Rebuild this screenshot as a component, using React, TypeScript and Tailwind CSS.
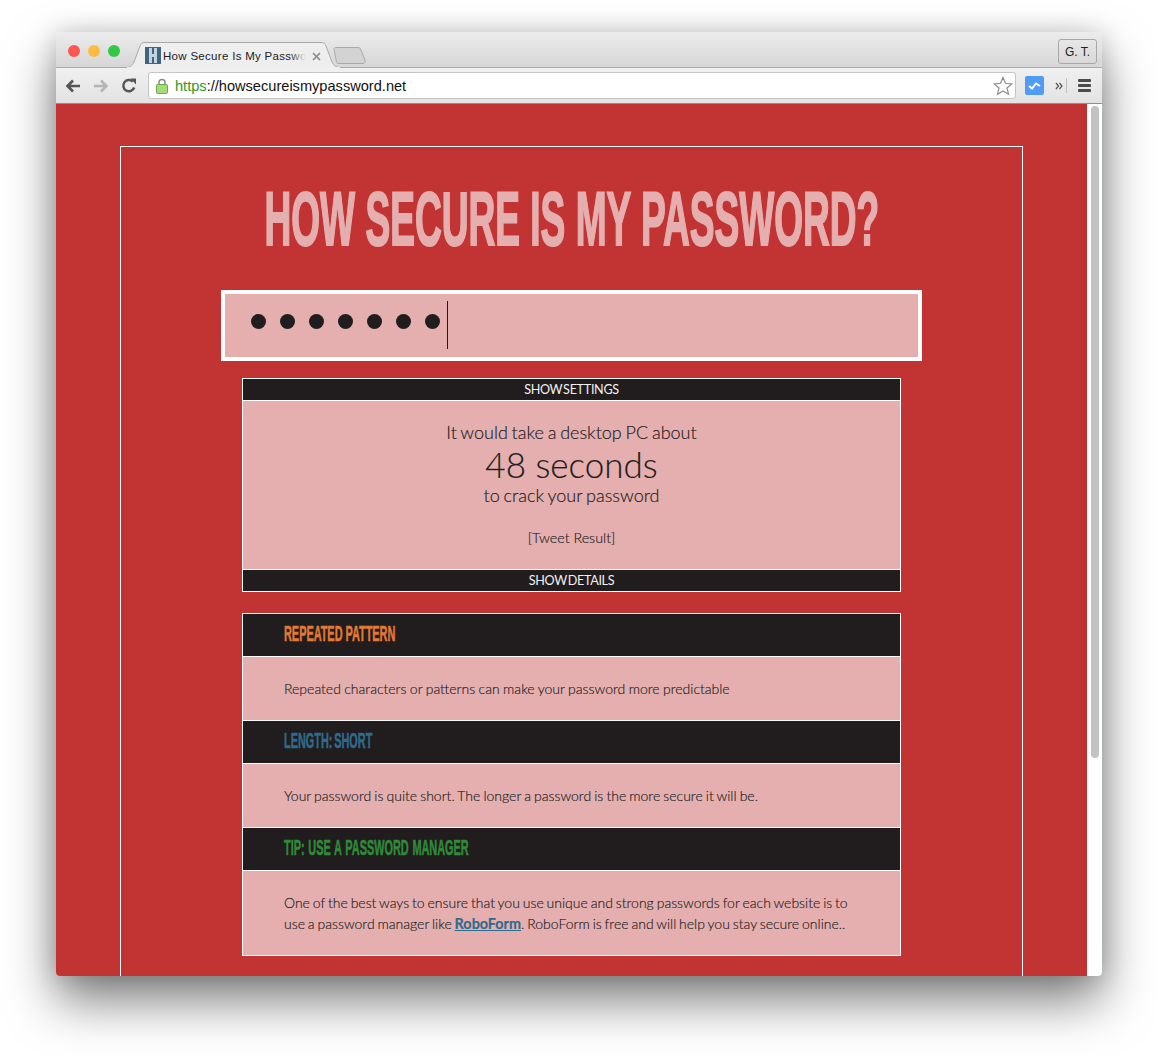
import React from "react";

const narrow = "font-['Liberation_Sans',sans-serif]";

function Section({ title, color, stroke, children }: { title: string; color: string; stroke: string; children: React.ReactNode }) {
  return (
    <>
      <div className="h-[43px] flex items-center pl-[41px] pb-[2px] bg-[#211c1d] border-b border-white">
        <span className={`${narrow} font-bold text-[22px] leading-none whitespace-nowrap inline-block origin-left scale-x-[0.495] ${stroke} ${color}`}>{title}</span>
      </div>
      {children}
    </>
  );
}

export default function App() {
  return (
    <div className="w-[1158px] h-[1056px] bg-white pl-[56px] pt-[32px] overflow-hidden font-['Lato',sans-serif]">
      <div className="w-[1046px] h-[944px] rounded-[4px] overflow-hidden flex flex-col shadow-[0_25px_50px_rgba(0,0,0,0.5),0_0_24px_rgba(0,0,0,0.16)]">
        {/* tab strip */}
        <div className="h-[36px] shrink-0 flex items-end bg-gradient-to-b from-[#ececec] to-[#d6d6d6] border-b border-[#a9a9a9] relative">
          <div className="flex gap-[8px] pl-[12px] pb-[10px]">
            <div className="w-[12px] h-[12px] rounded-full bg-[#fc5753]" />
            <div className="w-[12px] h-[12px] rounded-full bg-[#fdbc40]" />
            <div className="w-[12px] h-[12px] rounded-full bg-[#33c748]" />
          </div>
          <svg className="absolute left-[70px] bottom-[-1px]" width="216" height="26" viewBox="0 0 216 26">
            <path d="M0 25.5 C4 25.5 6 24 8 20 L14 4 C15 1.5 16 0.5 19 0.5 L195 0.5 C198 0.5 199 1.5 200 4 L206 20 C208 24 210 25.5 215 25.5" fill="#eeeeee" stroke="#a9a9a9" />
            <path d="M1 25.5 H214" stroke="#eeeeee" />
          </svg>
          <svg className="absolute left-[277px] bottom-[3px]" width="33" height="17" viewBox="0 0 33 17">
            <path d="M1 2.5 C1 1 2 0.5 3 0.5 L25 0.5 C26.5 0.5 27 1 27.5 2 L32 13 C32.5 15 31.5 16.5 30 16.5 L6 16.5 C4.5 16.5 4 16 3.5 15 Z" fill="#d3d3d3" stroke="#a9a9a9" />
          </svg>
          <div className="absolute left-[89px] top-[15px] w-[16px] h-[17px] bg-[#3c6682] flex items-center justify-center">
            <div className="w-[3px] h-[15px] bg-[#c6d3dc]" />
            <div className="w-[2px] h-[3px] bg-[#c6d3dc]" />
            <div className="w-[3px] h-[15px] bg-[#c6d3dc]" />
          </div>
          <div className="absolute left-[107px] top-[16px] w-[143px] overflow-hidden whitespace-nowrap text-[11.5px] leading-[16px] text-[#222] font-['Liberation_Sans',sans-serif] tracking-[0.3px]">
            How Secure Is My Passwo
            <div className="absolute right-0 top-0 w-[16px] h-full bg-gradient-to-r from-transparent to-[#eeeeee]" />
          </div>
          <svg className="absolute left-[256px] top-[20px]" width="9" height="9" viewBox="0 0 9 9">
            <path d="M1 1 L8 8 M8 1 L1 8" stroke="#888" strokeWidth="1.6" />
          </svg>
          <div className="absolute right-[5px] top-[7px] w-[39px] h-[25px] rounded-[3px] border border-[#a8a8a8] flex items-center justify-center text-[12px] text-[#222] font-['Liberation_Sans',sans-serif]">
            G. T.
          </div>
        </div>
        {/* toolbar */}
        <div className="h-[36px] shrink-0 flex items-center bg-gradient-to-b from-[#f0f0f0] to-[#e3e3e3] border-b border-[#8f8f8f] pl-[9px]">
          <svg width="16" height="14" viewBox="0 0 16 14" className="mr-[12px]">
            <path d="M15 7 H3 M8 1.5 L2.5 7 L8 12.5" fill="none" stroke="#555" strokeWidth="2.6" />
          </svg>
          <svg width="16" height="14" viewBox="0 0 16 14" className="mr-[12px]">
            <path d="M1 7 H13 M8 1.5 L13.5 7 L8 12.5" fill="none" stroke="#b5b5b5" strokeWidth="2.6" />
          </svg>
          <svg width="16" height="16" viewBox="0 0 16 16" className="mr-[11px]">
            <path d="M13.2 9.5 A5.6 5.6 0 1 1 11.8 3.6" fill="none" stroke="#555" strokeWidth="2.5" />
            <path d="M9.5 0.5 H15 V6.5 Z" fill="#555" />
          </svg>
          <div className="w-[868px] h-[27px] bg-white rounded-[3px] border border-[#c4c4c4] flex items-center pl-[7px] relative">
            <svg width="12" height="16" viewBox="0 0 12 16" className="mr-[7px]">
              <path d="M3 7 V4.5 A3 3 0 0 1 9 4.5 V7" fill="none" stroke="#8a8a8a" strokeWidth="1.5" />
              <rect x="0.5" y="6.5" width="11" height="9" rx="1" fill="#a5dc78" stroke="#6fa84a" />
            </svg>
            <span className="text-[14.6px] pt-[2px] font-['Liberation_Sans',sans-serif] text-[#111] whitespace-nowrap">
              <span className="text-[#2a9a2a]">https</span>://howsecureismypassword.net
            </span>
            <svg className="absolute right-[2px] top-[3px]" width="20" height="20" viewBox="0 0 20 20">
              <path d="M10 1.5 L12.5 7.3 L18.8 7.9 L14 12 L15.5 18.2 L10 15 L4.5 18.2 L6 12 L1.2 7.9 L7.5 7.3 Z" fill="#fff" stroke="#8c8c8c" strokeWidth="1.2" />
            </svg>
          </div>
          <div className="ml-[9px] w-[19px] h-[19px] rounded-[2px] bg-[#4f9bf5] flex items-center justify-center">
            <svg width="13" height="9" viewBox="0 0 13 9">
              <path d="M1 5 L4 7.5 L8 2.5 L12 5" fill="none" stroke="#fff" strokeWidth="2" />
            </svg>
          </div>
          <svg className="ml-[11px]" width="8" height="8" viewBox="0 0 8 8">
            <path d="M1 1 L3.5 4 L1 7 M4.5 1 L7 4 L4.5 7" fill="none" stroke="#555" strokeWidth="1.2" />
          </svg>
          <div className="ml-[3px] w-px h-[15px] bg-[#c0c0c0]" />
          <div className="ml-[11px] w-[13px] flex flex-col gap-[2px]">
            <div className="h-[3px] rounded-[1px] bg-[#4a4a4a]" />
            <div className="h-[3px] rounded-[1px] bg-[#4a4a4a]" />
            <div className="h-[3px] rounded-[1px] bg-[#4a4a4a]" />
          </div>
        </div>
        {/* body */}
        <div className="flex-1 min-h-0 flex bg-[#c23433]">
          <div className="flex-1 min-w-0 pl-[64px] pt-[42px] overflow-hidden">
            <div className="w-[903px] h-[900px] border border-white border-b-0 flex flex-col items-center">
              <h1 className={`${narrow} mt-[26px] font-bold text-[76px] leading-[92px] text-[#e5afaf] whitespace-nowrap scale-x-[0.488] [-webkit-text-stroke:2px_#e5afaf]`}>HOW SECURE IS MY PASSWORD?</h1>
              <div className="mt-[25px] w-[701px] h-[71px] border-[4px] border-white bg-[#e5afaf] flex items-start pl-[26px]">
                <div className="flex gap-[14px] mt-[20px]">
                  {[0, 1, 2, 3, 4, 5, 6].map((i) => (
                    <div key={i} className="w-[15px] h-[15px] rounded-full bg-[#211c1d]" />
                  ))}
                </div>
                <div className="ml-[7px] mt-[7px] w-px h-[48px] bg-[#211c1d]" />
              </div>
              <div className="mt-[17px] w-[659px] border border-white bg-[#e5afaf] text-[#211c1d] text-center">
                <div className="h-[22px] bg-[#211c1d] border-b border-white text-[#f2f2f2] text-[12.6px] leading-[21px] tracking-[-0.3px] [word-spacing:-2px]">SHOW SETTINGS</div>
                <div className="h-[168px] pt-[19px] font-light [-webkit-text-stroke:0.15px_#211c1d]">
                  <div className="text-[18px] leading-[24px] [word-spacing:-1.1px]">It would take a desktop PC about</div>
                  <div className="text-[35px] leading-[41px]">48 seconds</div>
                  <div className="text-[18px] leading-[20px] [word-spacing:-1px]">to crack your password</div>
                  <div className="mt-[23px] text-[14.3px] leading-[20px]">[Tweet Result]</div>
                </div>
                <div className="h-[22px] bg-[#211c1d] border-t border-white text-[#f2f2f2] text-[12.6px] leading-[21px] tracking-[-0.3px] [word-spacing:-2px]">SHOW DETAILS</div>
              </div>
              <div className="mt-[21px] w-[659px] border border-white bg-[#e5afaf] text-[#211c1d] font-light text-[14px]">
                <Section title="REPEATED PATTERN" color="text-[#e07b35]" stroke="[-webkit-text-stroke:0.6px_#e07b35]">
                  <div className="h-[64px] flex items-center pl-[41px] border-b border-white [word-spacing:-0.4px] [-webkit-text-stroke:0.15px_#211c1d]">Repeated characters or patterns can make your password more predictable</div>
                </Section>
                <Section title="LENGTH: SHORT" color="text-[#2f6a8c]" stroke="[-webkit-text-stroke:0.6px_#2f6a8c] [word-spacing:-2.5px]">
                  <div className="h-[64px] flex items-center pl-[41px] border-b border-white [word-spacing:-0.7px] [-webkit-text-stroke:0.15px_#211c1d]">Your password is quite short. The longer a password is the more secure it will be.</div>
                </Section>
                <Section title="TIP: USE A PASSWORD MANAGER" color="text-[#2f8a3a]" stroke="[-webkit-text-stroke:0.6px_#2f8a3a] [word-spacing:1.5px]">
                  <div className="h-[84px] pl-[41px] pr-[40px] pt-[21px] leading-[21px] [word-spacing:-0.9px] [-webkit-text-stroke:0.15px_#211c1d]">
                    One of the best ways to ensure that you use unique and strong passwords for each website is to use a password manager like <a className="font-bold text-[14.4px] underline text-[#2f6a8c] [-webkit-text-stroke:0.15px_#2f6a8c]">RoboForm</a>. RoboForm is free and will help you stay secure online..
                  </div>
                </Section>
              </div>
            </div>
          </div>
          <div className="w-[15px] shrink-0 bg-white pl-[4px] pr-[3px] pt-[2px]">
            <div className="h-[652px] rounded-full bg-[#c2c2c2]" />
          </div>
        </div>
      </div>
    </div>
  );
}
